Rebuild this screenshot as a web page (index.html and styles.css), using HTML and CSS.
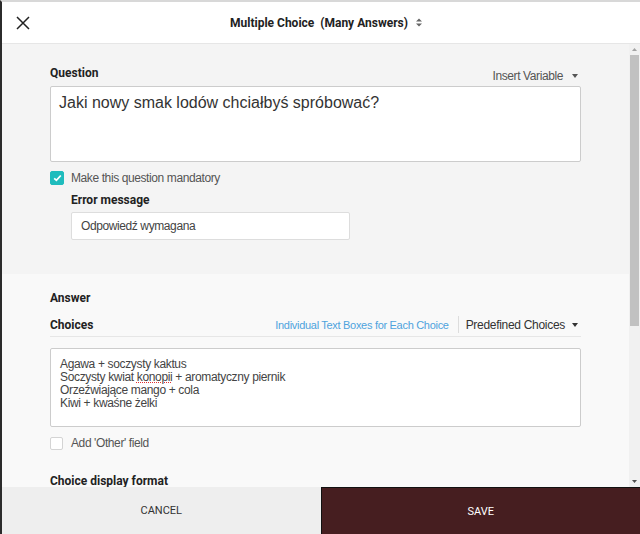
FILE: index.html
```html
<!DOCTYPE html>
<html>
<head>
<meta charset="utf-8">
<link rel="stylesheet" href="styles.css">
</head>
<body>
<div class="app">
  <header class="topbar">
    <button class="close" aria-label="Close">
      <svg width="14" height="14" viewBox="0 0 14 14"><path d="M1 1 L13 13 M13 1 L1 13" stroke="#222" stroke-width="1.5" fill="none"/></svg>
    </button>
    <div class="title">Multiple Choice&nbsp; (Many Answers)
      <svg class="updown" width="6" height="9" viewBox="0 0 6 9"><path d="M0 3.5 L3 0.5 L6 3.5 Z M0 5.5 L3 8.5 L6 5.5 Z" fill="#666"/></svg>
    </div>
  </header>
  <div class="body-row">
    <main class="scroller">
      <section class="sec sec-question">
        <div class="label-row">
          <div class="label">Question</div>
          <div class="dropdown">Insert Variable <span class="caret"></span></div>
        </div>
        <div class="qbox">Jaki nowy smak lodów chciałbyś spróbować?</div>
        <label class="check-row">
          <span class="check on"><svg width="9" height="8" viewBox="0 0 9 8"><path d="M1.2 4.3 L3.4 6.3 L7.8 1.5" stroke="#fff" stroke-width="1.8" fill="none"/></svg></span>
          <span class="check-text">Make this question mandatory</span>
        </label>
        <div class="err">
          <div class="label">Error message</div>
          <div class="input">Odpowiedź wymagana</div>
        </div>
      </section>
      <section class="sec sec-answer">
        <div class="label">Answer</div>
        <div class="choices-row">
          <div class="label">Choices</div>
          <div class="choices-tools">
            <span class="link">Individual Text Boxes for Each Choice</span>
            <span class="vsep"></span>
            <span class="dropdown dark">Predefined Choices <span class="caret dark"></span></span>
          </div>
        </div>
        <div class="cbox">
          <div>Agawa + soczysty kaktus</div>
          <div>Soczysty kwiat <span class="spell">konopii</span> + aromatyczny piernik</div>
          <div>Orzeźwiające mango + cola</div>
          <div>Kiwi + kwaśne żelki</div>
        </div>
        <label class="check-row other">
          <span class="check"></span>
          <span class="check-text">Add 'Other' field</span>
        </label>
        <div class="label fmt">Choice display format</div>
      </section>
    </main>
    <div class="vscroll">
      <div class="sb-btn"><svg width="5" height="3" viewBox="0 0 5 3"><path d="M0 3 L2.5 0 L5 3 Z" fill="#a3a3a3"/></svg></div>
      <div class="sb-thumb"></div>
      <div class="sb-track"></div>
      <div class="sb-btn"><svg width="5" height="3" viewBox="0 0 5 3"><path d="M0 0 L2.5 3 L5 0 Z" fill="#505050"/></svg></div>
    </div>
  </div>
  <footer class="actions">
    <button class="btn cancel">CANCEL</button>
    <button class="btn save">SAVE</button>
  </footer>
</div>
</body>
</html>
```
FILE: styles.css
```css
* { box-sizing: border-box; }
html, body { margin: 0; padding: 0; }
body {
  width: 640px;
  height: 534px;
  overflow: hidden;
  font-family: "Liberation Sans", Arial, sans-serif;
  color: #333;
}
.app {
  width: 640px;
  height: 534px;
  display: flex;
  flex-direction: column;
  border-top: 2px solid #d8d8d8;
  border-left: 2px solid #2b2b2b;
}
.topbar {
  height: 42px;
  flex: none;
  background: #fff;
  border-bottom: 1px solid #e6e6e6;
  display: flex;
  align-items: center;
  justify-content: center;
  position: relative;
}
.close {
  position: absolute;
  left: 13px;
  top: 13px;
  width: 16px;
  height: 16px;
  padding: 1px;
  border: 0;
  background: none;
  display: flex;
}
.title {
  font-family: Roboto, "Liberation Sans", Arial, sans-serif;
  font-weight: bold;
  font-size: 12px;
  color: #222;
  margin-left: 10px;
  display: flex;
  align-items: center;
}
.updown { margin-left: 8px; }
.body-row {
  flex: 1;
  min-height: 0;
  display: flex;
}
.scroller {
  flex: 1;
  min-width: 0;
  overflow: hidden;
  background: #f9f9f9;
}
.vscroll {
  width: 11px;
  flex: none;
  background: #f1f1f1;
  display: flex;
  flex-direction: column;
}
.sb-btn {
  height: 11px;
  flex: none;
  display: flex;
  align-items: center;
  justify-content: center;
}
.sb-thumb {
  height: 271px;
  flex: none;
  margin: 0 1px 0 1px;
  background: #c1c1c1;
}
.sb-track { flex: 1; }
.sec { padding: 0 48px; }
.sec-question {
  background: #f4f4f4;
  padding-top: 21px;
  padding-bottom: 34px;
}
.label {
  font-family: Roboto, "Liberation Sans", Arial, sans-serif;
  font-weight: bold;
  font-size: 12px;
  line-height: 16px;
  color: #222;
}
.label-row {
  display: flex;
  justify-content: space-between;
  align-items: flex-end;
  margin-bottom: 5px;
}
.dropdown {
  font-size: 12px;
  letter-spacing: -0.4px;
  color: #555;
  line-height: 16px;
  margin-right: 3px;
  display: flex;
  align-items: center;
}
.label-row .dropdown { margin-bottom: -3px; }
.dropdown.dark { color: #333; letter-spacing: -0.3px; }
.caret {
  display: inline-block;
  width: 0;
  height: 0;
  border-left: 3.5px solid transparent;
  border-right: 3.5px solid transparent;
  border-top: 4px solid #555;
  margin-left: 9px;
}
.caret.dark { border-top-color: #333; margin-left: 7px; }
.qbox {
  height: 76px;
  background: #fff;
  border: 1px solid #ccc;
  border-radius: 2px;
  padding: 6px 8px;
  font-size: 16px;
  line-height: 19px;
  color: #333;
}
.check-row {
  display: flex;
  align-items: center;
  margin-top: 9px;
}
.check {
  width: 14px;
  height: 14px;
  border-radius: 2px;
  border: 1px solid #d4d4d4;
  background: #fff;
  display: flex;
  align-items: center;
  justify-content: center;
  flex: none;
}
.check.on { background: #1fbcbd; border-color: #1fbcbd; }
.check-text {
  font-size: 12px;
  letter-spacing: -0.4px;
  color: #555;
  margin-left: 7px;
  line-height: 14px;
}
.err { margin-left: 21px; margin-top: 7px; }
.input {
  margin-top: 4px;
  width: 279px;
  height: 28px;
  background: #fff;
  border: 1px solid #ddd;
  border-radius: 2px;
  font-size: 12px;
  letter-spacing: -0.4px;
  color: #444;
  padding: 0 9px;
  display: flex;
  align-items: center;
}
.sec-answer {
  padding-top: 16px;
  background: #f9f9f9;
}
.choices-row {
  display: flex;
  justify-content: space-between;
  align-items: center;
  margin-top: 10px;
  padding-bottom: 3px;
  border-bottom: 1px solid #e6e6e6;
}
.choices-tools {
  display: flex;
  align-items: center;
}
.link {
  font-size: 11px;
  letter-spacing: -0.3px;
  color: #4ea3dd;
}
.vsep {
  width: 1px;
  height: 17px;
  background: #ddd;
  margin: 0 7px 0 9px;
}
.cbox {
  margin-top: 11px;
  height: 79px;
  background: #fff;
  border: 1px solid #ccc;
  border-radius: 2px;
  padding: 9px 9px 6px;
  font-size: 12px;
  letter-spacing: -0.35px;
  line-height: 13px;
  color: #444;
}
.spell {
  text-decoration: underline dotted #e03030;
  text-decoration-thickness: 1px;
  text-underline-offset: 1px;
}
.check-row.other { margin-top: 9px; }
.check-row.other .check { width: 13px; height: 13px; }
.check-row.other .check-text { margin-left: 8px; }
.fmt { margin-top: 24px; line-height: 14px; }
.actions {
  height: 47px;
  flex: none;
  display: flex;
}
.btn {
  flex: 1;
  border: 0;
  font-family: Roboto, "Liberation Sans", Arial, sans-serif;
  font-size: 11px;
  padding: 0;
}
.cancel { background: #eeeeee; color: #333; }
.save {
  background: #461e20;
  color: #fff;
  border-top: 1px solid #111;
  border-left: 1px solid #111;
}
```
